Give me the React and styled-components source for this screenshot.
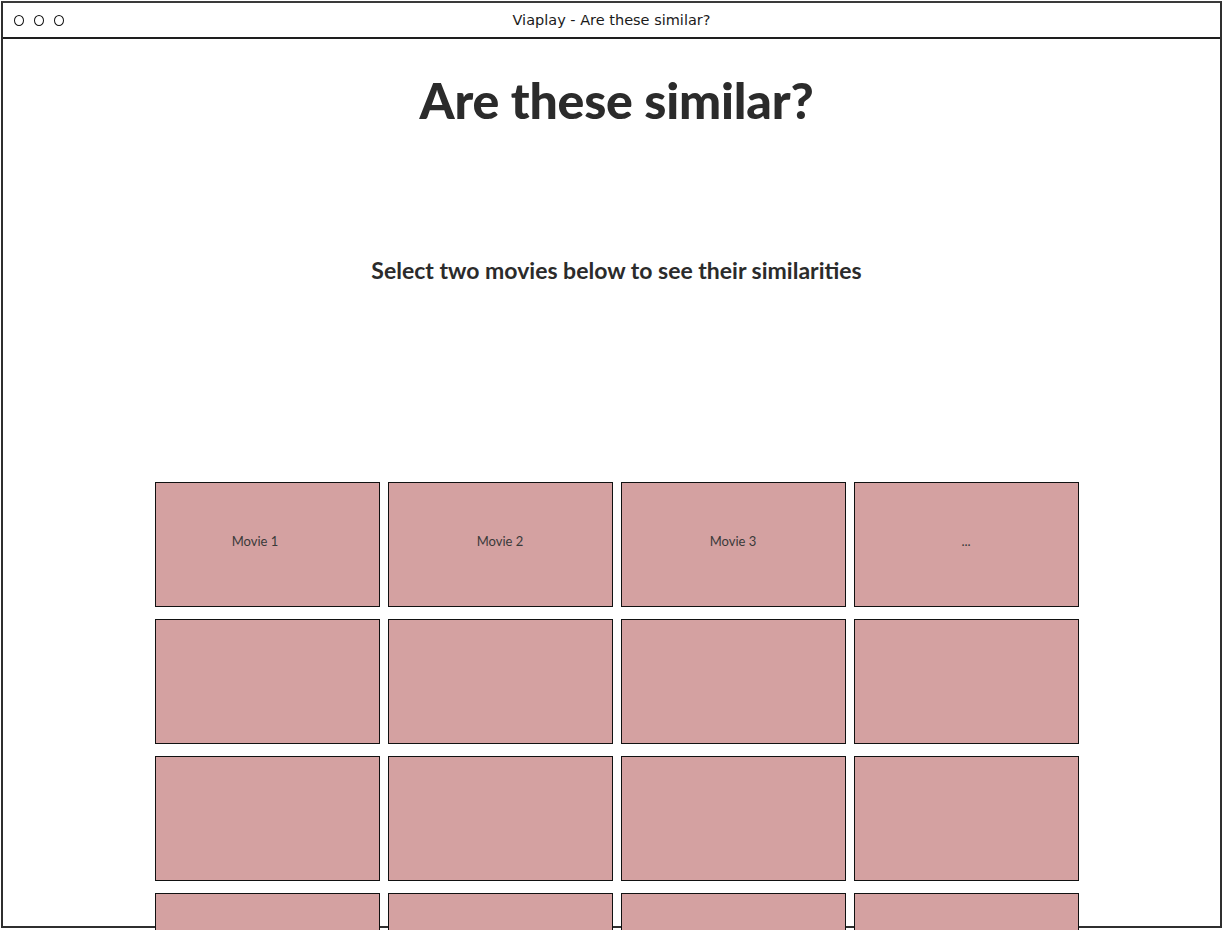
import * as React from 'react'
import styled, { createGlobalStyle } from 'styled-components'

const GlobalStyle = createGlobalStyle`
  html, body {
    margin: 0;
    padding: 0;
    height: 930px;
    overflow: hidden;
    background: #ffffff;
  }
  body {
    font-family: Lato, "Open Sans", sans-serif;
    color: #2b2b2b;
  }
`

const Window = styled.div`
  box-sizing: border-box;
  margin: 1px 0 0 1px;
  width: 1221px;
  height: 927px;
  border: 2px solid #2f2f2f;
  border-top-color: #3a3a3a;
  display: flex;
  flex-direction: column;
`

const TitleBar = styled.div`
  box-sizing: border-box;
  height: 36px;
  flex: 0 0 auto;
  border-bottom: 2px solid #1e1e1e;
  display: grid;
  grid-template-columns: 80px 1fr 80px;
  align-items: center;
`

const Dots = styled.div`
  display: flex;
  gap: 10px;
  padding-left: 11px;
`

const Dot = styled.span`
  width: 10px;
  height: 11px;
  border: 1.5px solid #111;
  border-radius: 50%;
  box-sizing: border-box;
`

const WindowTitle = styled.div`
  text-align: center;
  font-family: "DejaVu Sans", sans-serif;
  font-size: 14.5px;
  font-weight: 400;
  color: #1a1a1a;
`

const Content = styled.div`
  padding-left: 10px;
  display: flex;
  flex-direction: column;
  align-items: center;
`

const Heading = styled.h1`
  margin: 31px 0 0;
  font-size: 50px;
  line-height: 60px;
  font-weight: 900;
  letter-spacing: -0.2px;
  color: #2b2b2b;
`

const Subheading = styled.h2`
  margin: 125px 0 0;
  font-size: 23px;
  line-height: 30px;
  font-weight: 700;
  color: #2b2b2b;
`

const Grid = styled.div`
  margin-top: 197px;
  display: grid;
  grid-template-columns: repeat(4, 225px);
  grid-auto-rows: 125px;
  column-gap: 8px;
  row-gap: 12px;
`

const Tile = styled.div`
  box-sizing: border-box;
  background: #d4a1a1;
  border: 1px solid #111;
  display: flex;
  align-items: center;
  justify-content: center;
  padding-bottom: 7px;
  font-size: 13px;
  color: #3a3a3a;
  padding-right: ${p => (p.$shift ? '24px' : '0')};
`

const labels = ['Movie 1', 'Movie 2', 'Movie 3', '...']

export default function App() {
  const tiles = Array.from({ length: 16 }, (_, i) => labels[i] || '')
  return (
    <>
      <GlobalStyle />
      <Window>
        <TitleBar>
          <Dots>
            <Dot />
            <Dot />
            <Dot />
          </Dots>
          <WindowTitle>Viaplay - Are these similar?</WindowTitle>
          <span />
        </TitleBar>
        <Content>
          <Heading>Are these similar?</Heading>
          <Subheading>Select two movies below to see their similarities</Subheading>
          <Grid>
            {tiles.map((label, i) => (
              <Tile key={i} $shift={i === 0}>
                {label}
              </Tile>
            ))}
          </Grid>
        </Content>
      </Window>
    </>
  )
}
